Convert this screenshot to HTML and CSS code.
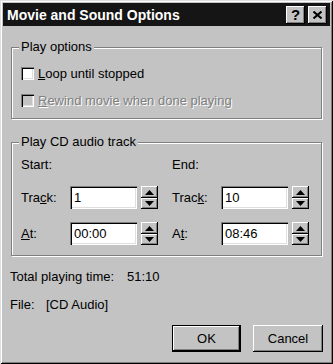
FILE: index.html
```html
<!DOCTYPE html>
<html>
<head>
<meta charset="utf-8">
<link rel="stylesheet" href="styles.css">
</head>
<body>
<div class="window">
  <div class="titlebar">
    <span class="title">Movie and Sound Options</span>
    <div class="caption-buttons">
      <span class="cap-btn help">?</span>
      <span class="cap-btn close"><svg width="9" height="8" viewBox="0 0 9 8"><path d="M0.5 0.5 L8.5 7.5 M8.5 0.5 L0.5 7.5" stroke="#000" stroke-width="2" fill="none"/></svg></span>
    </div>
  </div>
  <div class="content">
    <div class="group group-play">
      <div class="group-title">Play options</div>
      <div class="check"><span class="box"></span><span><u>L</u>oop until stopped</span></div>
      <div class="check disabled"><span class="box"></span><span><u>R</u>ewind movie when done playing</span></div>
    </div>
    <div class="group group-cd">
      <div class="group-title">Play CD audio track</div>
      <div class="cd-cols">
        <div class="col">
          <div class="col-head">Start:</div>
          <div class="field-row">
            <span class="field-label">Tra<u>c</u>k:</span>
            <span class="input">1</span>
            <span class="spin">
              <span class="spin-btn"><svg width="9" height="5" viewBox="0 0 9 5"><polygon points="0,5 9,5 4.5,0" fill="#000"/></svg></span>
              <span class="spin-btn"><svg width="9" height="5" viewBox="0 0 9 5"><polygon points="0,0 9,0 4.5,5" fill="#000"/></svg></span>
            </span>
          </div>
          <div class="field-row">
            <span class="field-label"><u>A</u>t:</span>
            <span class="input">00:00</span>
            <span class="spin">
              <span class="spin-btn"><svg width="9" height="5" viewBox="0 0 9 5"><polygon points="0,5 9,5 4.5,0" fill="#000"/></svg></span>
              <span class="spin-btn"><svg width="9" height="5" viewBox="0 0 9 5"><polygon points="0,0 9,0 4.5,5" fill="#000"/></svg></span>
            </span>
          </div>
        </div>
        <div class="col">
          <div class="col-head">End:</div>
          <div class="field-row">
            <span class="field-label">Trac<u>k</u>:</span>
            <span class="input">10</span>
            <span class="spin">
              <span class="spin-btn"><svg width="9" height="5" viewBox="0 0 9 5"><polygon points="0,5 9,5 4.5,0" fill="#000"/></svg></span>
              <span class="spin-btn"><svg width="9" height="5" viewBox="0 0 9 5"><polygon points="0,0 9,0 4.5,5" fill="#000"/></svg></span>
            </span>
          </div>
          <div class="field-row">
            <span class="field-label">A<u>t</u>:</span>
            <span class="input">08:46</span>
            <span class="spin">
              <span class="spin-btn"><svg width="9" height="5" viewBox="0 0 9 5"><polygon points="0,5 9,5 4.5,0" fill="#000"/></svg></span>
              <span class="spin-btn"><svg width="9" height="5" viewBox="0 0 9 5"><polygon points="0,0 9,0 4.5,5" fill="#000"/></svg></span>
            </span>
          </div>
        </div>
      </div>
    </div>
    <div class="info info-total"><span class="info-label label-total">Total playing time:</span><span>51:10</span></div>
    <div class="info info-file"><span class="info-label label-file">File:</span><span>[CD Audio]</span></div>
    <div class="buttons">
      <span class="btn default">OK</span>
      <span class="btn">Cancel</span>
    </div>
  </div>
</div>
</body>
</html>
```
FILE: styles.css
```css
* { box-sizing: border-box; }
html, body { margin: 0; padding: 0; }
body {
  background: #c3c3c3;
  font-family: "Liberation Sans", Arial, sans-serif;
  font-size: 13px;
  color: #000;
}
.window {
  width: 333px;
  height: 364px;
  background: #c3c3c3;
  padding: 3px;
  box-shadow: inset 1px 1px #dfdfdf, inset -1px -1px #000, inset 2px 2px #fff, inset -2px -2px #808080;
  display: flex;
  flex-direction: column;
}
.titlebar {
  height: 23px;
  background: #151515;
  color: #fff;
  display: flex;
  align-items: center;
  justify-content: space-between;
  padding: 0 3px 0 4px;
}
.title {
  font-weight: bold;
  font-size: 14px;
}
.caption-buttons {
  display: flex;
  gap: 3px;
}
.cap-btn {
  width: 19px;
  height: 18px;
  background: #c3c3c3;
  box-shadow: inset -1px -1px #000, inset 1px 1px #fff, inset -2px -2px #808080;
  display: flex;
  align-items: center;
  justify-content: center;
  color: #000;
  font-weight: bold;
  font-size: 15px;
  line-height: 1;
}
.content {
  flex: 1;
  padding: 21px 8px 0;
  display: flex;
  flex-direction: column;
}
.group {
  border: 1px solid #808080;
  box-shadow: inset 1px 1px #fff, 1px 1px #fff;
  display: flex;
  flex-direction: column;
  padding: 0 9px 10px;
}
.group-title {
  margin: -8px 0 0 -2px;
  align-self: flex-start;
  padding: 0 2px;
  line-height: 14px;
  background: #c3c3c3;
}
.group-play { gap: 11px; }
.group-cd { margin-top: 23px; gap: 8px; }
.check {
  display: flex;
  align-items: center;
  height: 16px;
  gap: 4px;
}
.box {
  width: 13px;
  height: 13px;
  background: #fff;
  box-shadow: inset 1px 1px #808080, inset 2px 2px #000, inset -1px -1px #fff, inset -2px -2px #dfdfdf;
}
.disabled {
  color: #808080;
  text-shadow: 1px 1px #fff;
}
.disabled .box { background: #c3c3c3; }
.cd-cols {
  display: grid;
  grid-template-columns: 151px auto;
}
.col {
  display: flex;
  flex-direction: column;
  gap: 13px;
}
.col-head { line-height: 16px; }
.field-row {
  display: flex;
  align-items: center;
  height: 23px;
}
.field-label { width: 49px; }
.input {
  width: 67px;
  height: 23px;
  background: #fff;
  box-shadow: inset 1px 1px #808080, inset 2px 2px #000, inset -1px -1px #fff, inset -2px -2px #dfdfdf;
  padding-left: 4px;
  display: flex;
  align-items: center;
}
.spin {
  margin-left: 4px;
  width: 17px;
  height: 23px;
  display: grid;
  grid-template-rows: 12px 11px;
}
.spin-btn {
  background: #c3c3c3;
  box-shadow: inset -1px -1px #000, inset 1px 1px #fff, inset -2px -2px #808080;
  display: flex;
  align-items: center;
  justify-content: center;
}
.spin-btn svg { display: block; }
.info {
  display: flex;
  line-height: 16px;
  margin-left: -1px;
}
.info-total { margin-top: 13px; }
.info-file { margin-top: 12px; }
.label-total { width: 117px; }
.label-file { width: 36px; }
.buttons {
  margin-top: 12px;
  margin-right: -1px;
  display: flex;
  justify-content: flex-end;
  gap: 12px;
}
.btn {
  width: 70px;
  height: 27px;
  background: #c3c3c3;
  box-shadow: inset -1px -1px #000, inset 1px 1px #fff, inset -2px -2px #808080;
  display: flex;
  align-items: center;
  justify-content: center;
}
.btn.default {
  width: 69px;
  box-shadow: inset 0 0 0 1px #000, inset -2px -2px #000, inset 2px 2px #fff, inset -3px -3px #808080;
}
```
